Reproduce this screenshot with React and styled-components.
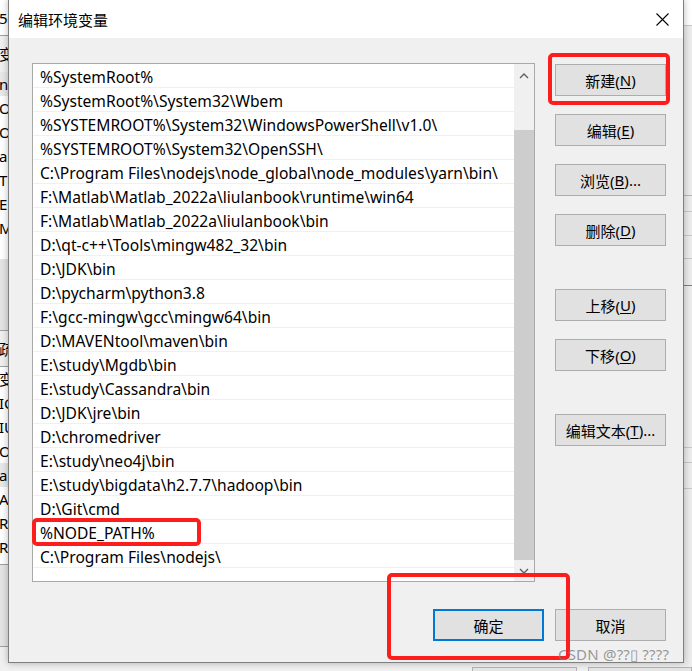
import React from "react";
import styled, { createGlobalStyle } from "styled-components";

const GlobalStyle = createGlobalStyle`
  html, body {
    margin: 0;
    padding: 0;
  }
  body {
    font-family: "Noto Sans", "Noto Sans CJK SC", sans-serif;
    background: #f0f0f0;
  }
`;

const Desktop = styled.div`
  position: relative;
  width: 692px;
  height: 671px;
  overflow: hidden;
  background: #f0f0f0;
`;

// windows peeking out behind the dialog
const LeftPeek = styled.div`
  position: absolute;
  left: 0;
  top: 0;
  width: 8px;
  height: 671px;
  display: flex;
  flex-direction: column;
  overflow: hidden;
  font-size: 15px;
  color: #000;
`;
const PeekBlock = styled.div`
  height: ${({ $h }) => $h}px;
  background: ${({ $bg }) => $bg || "#fff"};
  border-bottom: ${({ $line }) => ($line ? "1px solid #a0a0a0" : "none")};
  box-sizing: border-box;
  flex-shrink: 0;
  display: flex;
  flex-direction: column;
  justify-content: ${({ $center }) => ($center ? "center" : "flex-start")};
`;
const PeekText = styled.div`
  height: 24px;
  line-height: 24px;
  margin-left: -1px;
  white-space: nowrap;
  background: ${({ $sel }) => ($sel ? "#e8e8e8" : "transparent")};
`;
const RightPeek = styled.div`
  position: absolute;
  right: 0;
  top: 0;
  width: 8px;
  height: 671px;
  display: flex;
  flex-direction: column;
  overflow: hidden;
  background: #ececec;
`;
const PeekLine = styled.div`
  height: ${({ $h }) => $h}px;
  flex-shrink: 0;
  box-sizing: border-box;
  border-bottom: 1px solid ${({ $c }) => $c || "#c8c8c8"};
  background: ${({ $bg }) => $bg || "transparent"};
`;
const BottomPeek = styled.div`
  position: absolute;
  left: 0;
  top: 663px;
  width: 692px;
  height: 8px;
  display: flex;
  gap: 11px;
  padding-left: 472px;
  box-sizing: border-box;
`;
const PeekButton = styled.div`
  width: 110px;
  height: 20px;
  margin-top: 4px;
  box-sizing: border-box;
  border: 1px solid #b4b4b4;
  background: #e6e6e6;
`;

const Dialog = styled.div`
  position: absolute;
  left: 8px;
  top: -1px;
  width: 676px;
  height: 664px;
  box-sizing: border-box;
  border: 1px solid #7f7f7f;
  background: #f0f0f0;
  display: flex;
  flex-direction: column;
  box-shadow: 0 0 7px rgba(0, 0, 0, 0.28);
`;
const TitleBar = styled.div`
  height: 38px;
  flex-shrink: 0;
  background: #fff;
  display: flex;
  align-items: center;
  justify-content: space-between;
  padding: 1px 14px 0 9px;
  box-sizing: border-box;
`;
const Title = styled.span`
  font-family: "Noto Sans CJK SC", sans-serif;
  font-size: 15px;
  color: #000;
`;
const CloseButton = styled.div`
  width: 14px;
  height: 14px;
  display: flex;
  align-items: center;
  justify-content: center;
`;

const Body = styled.div`
  display: flex;
  gap: 20px;
  padding: 25px 17px 0 23px;
`;
const ListBox = styled.div`
  width: 503px;
  height: 519px;
  box-sizing: border-box;
  border: 1px solid #a9a9a9;
  background: #fff;
  display: flex;
`;
const Rows = styled.div`
  flex: 1;
  display: flex;
  flex-direction: column;
  overflow: hidden;
`;
const Row = styled.div`
  height: 24px;
  flex-shrink: 0;
  box-sizing: border-box;
  border-bottom: 1px solid #f0f0f0;
  padding: 1px 0 0 7px;
  line-height: 24px;
  font-size: 15.6px;
  color: #000;
  white-space: nowrap;
  overflow: hidden;
`;
const ScrollBar = styled.div`
  width: 20px;
  display: flex;
  flex-direction: column;
  background: #f0f0f0;
`;
const ScrollArrow = styled.div`
  height: ${({ $h }) => $h}px;
  flex-shrink: 0;
  display: flex;
  align-items: center;
  justify-content: center;
`;
const ScrollTrack = styled.div`
  flex: 1;
  display: flex;
  flex-direction: column;
  padding-top: 42px;
`;
const ScrollThumb = styled.div`
  flex: 1;
  background: #cdcdcd;
`;

const ButtonColumn = styled.div`
  width: 111px;
  display: flex;
  flex-direction: column;
  gap: 18px;
  padding-top: 1px;
`;
const ButtonGroup = styled.div`
  display: flex;
  flex-direction: column;
  gap: 18px;
  margin-top: ${({ $gap }) => $gap || 0}px;
`;
const Button = styled.div`
  width: 111px;
  height: 32px;
  box-sizing: border-box;
  border: ${({ $primary }) =>
    $primary ? "2px solid #0078d7" : "1px solid #adadad"};
  background: #e1e1e1;
  display: flex;
  align-items: center;
  justify-content: center;
  font-size: 15px;
  color: #000;
  white-space: nowrap;
  u {
    text-decoration: underline;
    text-underline-offset: 2px;
  }
`;
const Footer = styled.div`
  display: flex;
  justify-content: flex-end;
  gap: 11px;
  padding: 27px 17px 0 0;
`;

const Mark = styled.div`
  position: absolute;
  left: ${({ $x }) => $x}px;
  top: ${({ $y }) => $y}px;
  width: ${({ $w }) => $w}px;
  height: ${({ $h }) => $h}px;
  box-sizing: border-box;
  border: 4px solid #fe1d1d;
  border-radius: 5px;
  pointer-events: none;
`;
const Watermark = styled.div`
  position: absolute;
  left: 558px;
  top: 644px;
  font-size: 15px;
  color: rgba(120, 120, 120, 0.75);
  white-space: nowrap;
  letter-spacing: 0.2px;
`;

const paths = [
  "%SystemRoot%",
  "%SystemRoot%\\System32\\Wbem",
  "%SYSTEMROOT%\\System32\\WindowsPowerShell\\v1.0\\",
  "%SYSTEMROOT%\\System32\\OpenSSH\\",
  "C:\\Program Files\\nodejs\\node_global\\node_modules\\yarn\\bin\\",
  "F:\\Matlab\\Matlab_2022a\\liulanbook\\runtime\\win64",
  "F:\\Matlab\\Matlab_2022a\\liulanbook\\bin",
  "D:\\qt-c++\\Tools\\mingw482_32\\bin",
  "D:\\JDK\\bin",
  "D:\\pycharm\\python3.8",
  "F:\\gcc-mingw\\gcc\\mingw64\\bin",
  "D:\\MAVENtool\\maven\\bin",
  "E:\\study\\Mgdb\\bin",
  "E:\\study\\Cassandra\\bin",
  "D:\\JDK\\jre\\bin",
  "D:\\chromedriver",
  "E:\\study\\neo4j\\bin",
  "E:\\study\\bigdata\\h2.7.7\\hadoop\\bin",
  "D:\\Git\\cmd",
  "%NODE_PATH%",
  "C:\\Program Files\\nodejs\\",
];

function Chevron({ down }) {
  return (
    <svg width="10" height="6" viewBox="0 0 10 6">
      <path
        d={down ? "M1 1 L5 5 L9 1" : "M1 5 L5 1 L9 5"}
        fill="none"
        stroke="#606060"
        strokeWidth="1.4"
      />
    </svg>
  );
}

function Label({ text, k, tail = "" }) {
  return (
    <Button>
      {text}(<u>{k}</u>){tail}
    </Button>
  );
}

export default function App() {
  return (
    <Desktop>
      <GlobalStyle />
      <LeftPeek>
        <PeekBlock $h={36} $line $center>
          <PeekText>5(</PeekText>
        </PeekBlock>
        <PeekBlock $h={36} $bg="#f0f0f0" $center>
          <PeekText>变</PeekText>
        </PeekBlock>
        <PeekBlock $h={187}>
          <PeekText $sel>nt</PeekText>
          <PeekText>Or</PeekText>
          <PeekText>Or</PeekText>
          <PeekText>a</PeekText>
          <PeekText>T</PeekText>
          <PeekText>E</PeekText>
          <PeekText>M</PeekText>
        </PeekBlock>
        <PeekBlock $h={72} $bg="#e4e4e4" $line />
        <PeekBlock $h={36} $bg="#f0f0f0" $line $center>
          <PeekText>疏</PeekText>
        </PeekBlock>
        <PeekBlock $h={198} $line>
          <PeekText>变</PeekText>
          <PeekText>IC</PeekText>
          <PeekText>IU</PeekText>
          <PeekText>OS</PeekText>
          <PeekText $sel>a</PeekText>
          <PeekText>A</PeekText>
          <PeekText>R</PeekText>
          <PeekText>R</PeekText>
        </PeekBlock>
        <PeekBlock $h={82} $bg="#e4e4e4" $line />
      </LeftPeek>

      <RightPeek>
        <PeekLine $h={26} $bg="#fff" />
        <PeekLine $h={170} $c="#b8b8b8" />
        <PeekLine $h={16} />
        <PeekLine $h={24} />
        <PeekLine $h={23} />
        <PeekLine $h={27} $c="#808080" />
        <PeekLine $h={162} />
        <PeekLine $h={15} />
        <PeekLine $h={26} />
        <PeekLine $h={180} />
      </RightPeek>

      <BottomPeek>
        <PeekButton />
        <PeekButton />
      </BottomPeek>

      <Dialog>
        <TitleBar>
          <Title>编辑环境变量</Title>
          <CloseButton>
            <svg width="13" height="13" viewBox="0 0 13 13">
              <path
                d="M0.5 0.5 L12.5 12.5 M12.5 0.5 L0.5 12.5"
                stroke="#000"
                strokeWidth="1.1"
              />
            </svg>
          </CloseButton>
        </TitleBar>

        <Body>
          <ListBox>
            <Rows>
              {paths.map((p, i) => (
                <Row key={i}>{p}</Row>
              ))}
            </Rows>
            <ScrollBar>
              <ScrollArrow $h={24}>
                <Chevron />
              </ScrollArrow>
              <ScrollTrack>
                <ScrollThumb />
              </ScrollTrack>
              <ScrollArrow $h={21}>
                <Chevron down />
              </ScrollArrow>
            </ScrollBar>
          </ListBox>

          <ButtonColumn>
            <ButtonGroup>
              <Label text="新建" k="N" />
              <Label text="编辑" k="E" />
              <Label text="浏览" k="B" tail="..." />
              <Label text="删除" k="D" />
            </ButtonGroup>
            <ButtonGroup $gap={25}>
              <Label text="上移" k="U" />
              <Label text="下移" k="O" />
            </ButtonGroup>
            <ButtonGroup $gap={25}>
              <Label text="编辑文本" k="T" tail="..." />
            </ButtonGroup>
          </ButtonColumn>
        </Body>

        <Footer>
          <Button $primary>确定</Button>
          <Button>取消</Button>
        </Footer>
      </Dialog>

      <Mark $x={548} $y={53} $w={122} $h={52} />
      <Mark $x={32} $y={518} $w={169} $h={28} />
      <Mark $x={387} $y={573} $w={183} $h={87} />

      <Watermark>CSDN @??▯ ????</Watermark>
    </Desktop>
  );
}
